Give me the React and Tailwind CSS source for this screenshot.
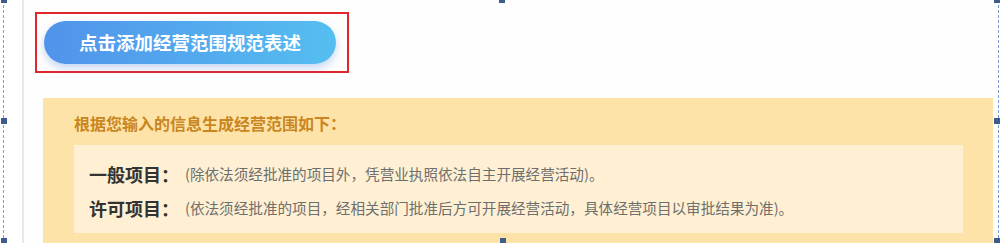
const Handle = ({ className }) => (
  <div className={"absolute w-[6px] h-[6px] bg-[#3d5b8c] " + className} />
);

const App = () => {
  return (
    <div
      className="relative w-[1000px] h-[243px] overflow-hidden bg-white"
      style={{ fontFamily: '"Microsoft YaHei", "Noto Sans CJK SC", sans-serif' }}
    >
      <div className="ml-[3px] w-[996px] h-full border-x border-dashed border-[#7a9bd0] flex">
        <div className="w-[18px] shrink-0" />
        <div className="flex-1 h-full border-l-2 border-[#e9e9e9] bg-[#fefefe]">
          <div className="pl-[11px] pt-[12px]">
            <div className="w-[314px] h-[61px] border-2 border-[#e0262b] pl-[7px] pt-[7px]">
              <button className="w-[292px] h-[43px] rounded-full bg-gradient-to-r from-[#5193eb] to-[#55bef0] shadow-[0_4px_8px_rgba(90,140,220,0.35)] text-white text-[18.5px] font-bold">
                点击添加经营范围规范表述
              </button>
            </div>
          </div>

          <div className="ml-[19px] mt-[25px] w-[950px] h-[200px] bg-[#fee3a8] px-[31px] pt-[13px]">
            <div className="text-[16px] leading-[24px] font-bold text-[#c98620]">
              根据您输入的信息生成经营范围如下：
            </div>
            <div className="mt-[10px] w-[889px] h-[88px] bg-[#fff0d3] pl-[15px] pt-[12px]">
              <div className="flex items-center h-[34px]">
                <span className="w-[96px] text-[18px] font-bold text-[#333333]">一般项目：</span>
                <span className="text-[14.6px] text-[#6e6e6e]">
                  (除依法须经批准的项目外，凭营业执照依法自主开展经营活动)。
                </span>
              </div>
              <div className="flex items-center h-[34px]">
                <span className="w-[96px] text-[18px] font-bold text-[#333333]">许可项目：</span>
                <span className="text-[14.6px] text-[#6e6e6e]">
                  (依法须经批准的项目，经相关部门批准后方可开展经营活动，具体经营项目以审批结果为准)。
                </span>
              </div>
            </div>
          </div>
        </div>
      </div>

      <Handle className="left-[1px] top-[-3px]" />
      <Handle className="left-[1px] top-[118px]" />
      <Handle className="left-[1px] top-[238px]" />
      <Handle className="left-[499px] top-[-3px]" />
      <Handle className="left-[500px] top-[238px]" />
      <Handle className="left-[994px] top-[-3px]" />
      <Handle className="left-[994px] top-[118px]" />
      <Handle className="left-[994px] top-[238px]" />
    </div>
  );
};

export default App;
